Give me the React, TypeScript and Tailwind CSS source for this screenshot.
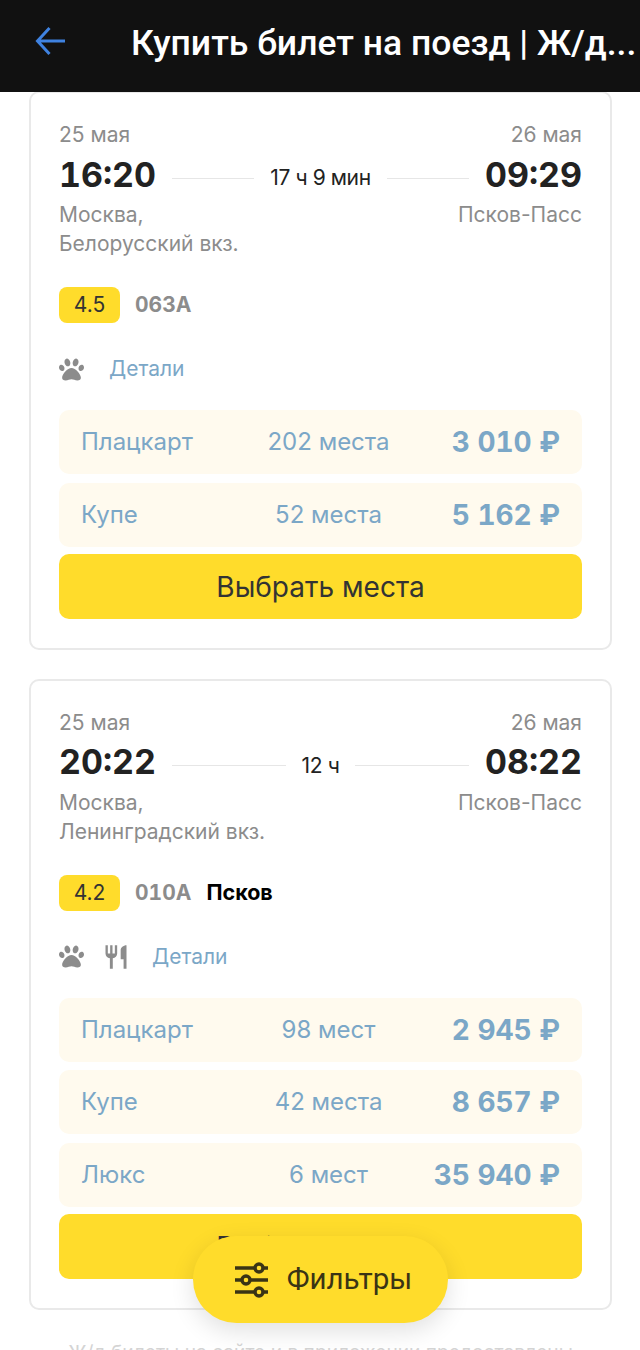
import { FaPaw } from 'react-icons/fa'
import { MdRestaurant } from 'react-icons/md'

interface Fare {
  name: string
  seats: string
  price: string
}

interface Trip {
  depDate: string
  arrDate: string
  dep: string
  arr: string
  duration: string
  from: string
  station: string
  to: string
  rating: string
  train: string
  brand?: string
  meals?: boolean
  fares: Fare[]
}

const TRIPS: Trip[] = [
  {
    depDate: '25 мая',
    arrDate: '26 мая',
    dep: '16:20',
    arr: '09:29',
    duration: '17 ч 9 мин',
    from: 'Москва,',
    station: 'Белорусский вкз.',
    to: 'Псков-Пасс',
    rating: '4.5',
    train: '063А',
    fares: [
      { name: 'Плацкарт', seats: '202 места', price: '3 010 ₽' },
      { name: 'Купе', seats: '52 места', price: '5 162 ₽' },
    ],
  },
  {
    depDate: '25 мая',
    arrDate: '26 мая',
    dep: '20:22',
    arr: '08:22',
    duration: '12 ч',
    from: 'Москва,',
    station: 'Ленинградский вкз.',
    to: 'Псков-Пасс',
    rating: '4.2',
    train: '010А',
    brand: 'Псков',
    meals: true,
    fares: [
      { name: 'Плацкарт', seats: '98 мест', price: '2 945 ₽' },
      { name: 'Купе', seats: '42 места', price: '8 657 ₽' },
      { name: 'Люкс', seats: '6 мест', price: '35 940 ₽' },
    ],
  },
]

function TripCard({ trip }: { trip: Trip }) {
  return (
    <div className="rounded-[10px] border-2 border-[#e9e9e9] bg-white px-[28px] pt-[27px] pb-[29px]">
      {/* Dates */}
      <div className="flex justify-between text-[21px] leading-[29px] text-[#8c8c8c]">
        <span>{trip.depDate}</span>
        <span>{trip.arrDate}</span>
      </div>

      {/* Times */}
      <div className="mt-[9px] flex h-[40px] items-center">
        <span className="mb-[8px] text-[34px] font-bold text-[#222] tabular-nums">{trip.dep}</span>
        <div className="ml-4 h-px flex-1 bg-[#e6e6e6]" />
        <span className="px-4 text-[21px] tracking-[-0.4px] text-[#222]">{trip.duration}</span>
        <div className="mr-4 h-px flex-1 bg-[#e6e6e6]" />
        <span className="mb-[8px] text-[34px] font-bold text-[#222] tabular-nums">{trip.arr}</span>
      </div>

      {/* Stations */}
      <div className="mt-[2px] flex justify-between text-[21px] leading-[29px] text-[#8c8c8c]">
        <div>
          <div>{trip.from}</div>
          <div>{trip.station}</div>
        </div>
        <div>{trip.to}</div>
      </div>

      {/* Train */}
      <div className="mt-[29px] flex items-center">
        <span className="flex h-[36px] w-[61px] items-center justify-center rounded-lg bg-[#ffdc2b] text-[21px] text-[#333]">
          {trip.rating}
        </span>
        <span className="ml-[15px] text-[21px] font-bold text-[#8c8c8c] tabular-nums">{trip.train}</span>
        {trip.brand && <span className="ml-[15px] text-[21.5px] font-bold text-black">{trip.brand}</span>}
      </div>

      {/* Amenities */}
      <div className="mt-[31px] flex h-[30px] items-center">
        <FaPaw className="h-[25px] w-[25px] text-[#8c8c8c]" />
        {trip.meals && <MdRestaurant className="ml-[18px] h-[28px] w-[28px] text-[#8c8c8c]" />}
        <span className={`${trip.meals ? 'ml-[22px]' : 'ml-[25px]'} text-[21px] text-[#7ba7c7]`}>Детали</span>
      </div>

      {/* Fares */}
      <div className="mt-[26px] flex flex-col gap-[8.5px]">
        {trip.fares.map((fare) => (
          <div
            key={fare.name}
            className="grid h-[64px] grid-cols-[176px_1fr_160px] items-center rounded-[10px] bg-[#fffaee] px-[22px] text-[24px] text-[#7ba7c7]"
          >
            <span>{fare.name}</span>
            <span className="text-center whitespace-nowrap">{fare.seats}</span>
            <span className="text-right text-[28px] font-bold whitespace-nowrap tabular-nums">{fare.price}</span>
          </div>
        ))}
      </div>

      <button className="mt-[7.5px] h-[65px] w-full rounded-[10px] bg-[#ffdc2b] text-[28px] text-[#333]">
        Выбрать места
      </button>
    </div>
  )
}

export default function App() {
  return (
    <div className="relative h-[1350px] w-[640px] overflow-hidden bg-white font-['Inter',sans-serif]">
      <header className="relative z-10 flex h-[92px] items-center bg-[#111] pl-[32px] font-['Roboto',sans-serif]">
        <svg className="mb-[10px]" width="38" height="38" viewBox="0 0 38 38" fill="none" stroke="#3f82e0" strokeWidth="3">
          <path d="M33 19H6M17.5 6 5.5 19l12 13" />
        </svg>
        <h1 className="mb-[4px] ml-[61px] text-[35.5px] font-medium whitespace-nowrap text-white">
          Купить билет на поезд | Ж/д...
        </h1>
      </header>

      <main className="-mt-[1px] ml-[29px] flex w-[583px] flex-col gap-[28.5px]">
        {TRIPS.map((trip) => (
          <TripCard key={trip.dep} trip={trip} />
        ))}
        <p className="-mt-[1px] text-center text-[19.2px] leading-[29px] whitespace-nowrap text-[#d4d4d4]">
          Ж/д билеты на сайте и в приложении предоставлены
        </p>
      </main>

      {/* Floating filters button */}
      <button className="absolute top-[1236px] left-[193px] flex h-[87px] w-[255px] items-center justify-center gap-[19px] rounded-[44px] bg-[#ffdc2b] pl-[6px] font-['Roboto',sans-serif] text-[29.5px] text-[#3a3415] shadow-[0_8px_24px_rgba(0,0,0,0.12)]">
        <svg width="33" height="36" viewBox="0 0 33 36" fill="none" stroke="#3a3415" strokeWidth="3.4">
          <path d="M0 6h19M29 6h4M0 18h6M16 18h17M0 30h19M29 30h4" />
          <circle cx="24" cy="6" r="4" />
          <circle cx="11" cy="18" r="4" />
          <circle cx="24" cy="30" r="4" />
        </svg>
        Фильтры
      </button>
    </div>
  )
}
